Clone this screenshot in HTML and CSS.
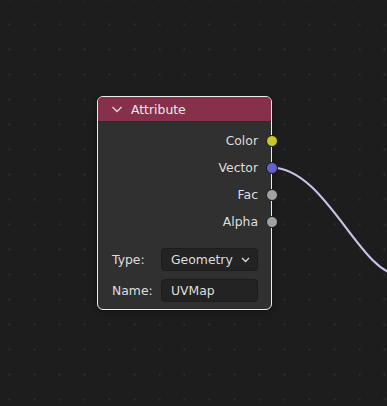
FILE: index.html
```html
<!DOCTYPE html>
<html lang="en">
<head>
  <meta charset="UTF-8">
  <meta name="viewport" content="width=device-width, initial-scale=1.0">
  <title>Attribute Node</title>
  <link rel="stylesheet" href="styles.css">
</head>
<body>
  <div class="editor">
    <svg class="links" width="387" height="406" viewBox="0 0 387 406">
      <path d="M271 167.5 C326 167.5 360 275 400 275" class="link"/>
    </svg>

    <div class="node">
      <div class="node-header">
        <svg class="chevron" width="12" height="7" viewBox="0 0 12 7">
          <polyline points="1.5,1 6,5.5 10.5,1"/>
        </svg>
        <span>Attribute</span>
      </div>

      <div class="node-body">
        <div class="output">
          <span>Color</span>
          <i class="socket socket-color"></i>
        </div>
        <div class="output">
          <span>Vector</span>
          <i class="socket socket-vector"></i>
        </div>
        <div class="output">
          <span>Fac</span>
          <i class="socket socket-float"></i>
        </div>
        <div class="output">
          <span>Alpha</span>
          <i class="socket socket-float"></i>
        </div>

        <div class="props">
          <label>Type:</label>
          <div class="field dropdown">
            <span>Geometry</span>
            <svg width="9" height="6" viewBox="0 0 9 6">
              <polyline points="1,1 4.5,4.5 8,1"/>
            </svg>
          </div>
          <label>Name:</label>
          <div class="field">UVMap</div>
        </div>
      </div>
    </div>
  </div>
</body>
</html>
```

FILE: styles.css
```css
body {
  margin: 0;
  padding: 0;
  font-family: "DejaVu Sans", sans-serif;
  font-size: 12.4px;
  color: #dedede;
}
.editor {
  position: relative;
  width: 387px;
  height: 406px;
  overflow: hidden;
  background-color: #1d1d1d;
  background-image: radial-gradient(circle, #292929 1.1px, transparent 1.5px);
  background-size: 25px 25px;
  background-position: -3px 12px;
}
.links {
  position: absolute;
  left: 0;
  top: 0;
}
.link {
  fill: none;
  stroke: #c4c4e4;
  stroke-width: 2.2;
}
.node {
  position: absolute;
  left: 97px;
  top: 96px;
  width: 175px;
  height: 214px;
  box-sizing: border-box;
  border: 1px solid #ececec;
  border-radius: 6px;
  background: #303030;
  box-shadow: 0 2px 6px rgba(0, 0, 0, 0.35);
}
.node-header {
  height: 24px;
  display: flex;
  align-items: center;
  gap: 8px;
  padding-left: 13px;
  background: #86304b;
  border-radius: 5px 5px 0 0;
  border-bottom: 1px solid #2a2a2a;
  color: #e8e8e8;
}
.chevron polyline,
.dropdown polyline {
  fill: none;
  stroke: #dcdcdc;
  stroke-width: 1.3;
}
.node-body {
  padding-top: 5px;
}
.output {
  position: relative;
  height: 27px;
  display: flex;
  align-items: center;
  justify-content: flex-end;
  padding-right: 13px;
}
.socket {
  position: absolute;
  right: -6.5px;
  top: 50%;
  width: 10px;
  height: 10px;
  margin-top: -6px;
  border-radius: 50%;
  border: 1px solid #1a1a1a;
}
.socket-color {
  background: #c7c729;
}
.socket-vector {
  background: #6363c7;
}
.socket-float {
  background: #a1a1a1;
}
.props {
  display: grid;
  grid-template-columns: 49px 1fr;
  grid-auto-rows: 23px;
  row-gap: 8px;
  margin-top: 13px;
  padding: 0 13px 0 14px;
  align-items: center;
}
.field {
  height: 23px;
  box-sizing: border-box;
  display: flex;
  align-items: center;
  justify-content: space-between;
  padding: 0 7px 0 9px;
  background: #232323;
  border: 1px solid #1c1c1c;
  border-radius: 4px;
}
```
